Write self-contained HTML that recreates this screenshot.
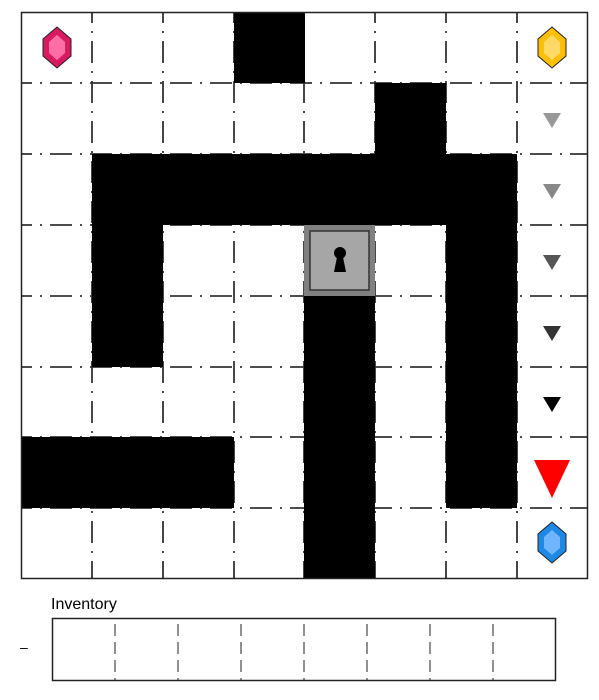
<!DOCTYPE html>
<html><head><style>
html,body{margin:0;padding:0;background:#fff;width:599px;height:700px;overflow:hidden}
svg{display:block}
</style></head><body>
<svg width="599" height="700" viewBox="0 0 599 700" xmlns="http://www.w3.org/2000/svg">
<rect width="599" height="700" fill="#fff"/>
<g stroke="#333" stroke-width="1.8" stroke-dasharray="22,8,2,8" stroke-dashoffset="11" fill="none">
<line x1="92" y1="12" x2="92" y2="579"/><line x1="163" y1="12" x2="163" y2="579"/>
<line x1="234" y1="12" x2="234" y2="579"/><line x1="304" y1="12" x2="304" y2="579"/>
<line x1="375" y1="12" x2="375" y2="579"/><line x1="446" y1="12" x2="446" y2="579"/>
<line x1="517" y1="12" x2="517" y2="579"/>
<line x1="21" y1="83" x2="588" y2="83"/><line x1="21" y1="154" x2="588" y2="154"/>
<line x1="21" y1="225" x2="588" y2="225"/><line x1="21" y1="296" x2="588" y2="296"/>
<line x1="21" y1="367" x2="588" y2="367"/><line x1="21" y1="437" x2="588" y2="437"/>
<line x1="21" y1="508" x2="588" y2="508"/>
</g>
<g fill="#000">
<rect x="234" y="12" width="71" height="71"/>
<rect x="375" y="83" width="71" height="71"/>
<rect x="92" y="154" width="425" height="71"/>
<rect x="92" y="225" width="71" height="142"/>
<rect x="446" y="225" width="71" height="283"/>
<rect x="304" y="296" width="71" height="283"/>
<rect x="21" y="437" width="213" height="71"/>
</g>
<rect x="304" y="225" width="71" height="71" fill="#808080"/>
<rect x="310" y="231" width="59" height="59" fill="#a6a6a6" stroke="#333" stroke-width="1.5"/>
<circle cx="340" cy="253" r="6" fill="#000"/>
<polygon points="337,257 343,257 346,272 334,272" fill="#000"/>
<rect x="21.5" y="12.5" width="566" height="566" fill="none" stroke="#222" stroke-width="1.5"/>
<polygon points="57,27 71,39 71,56 57,68 43,56 43,39" fill="#d81b60" stroke="#222" stroke-width="1"/>
<polygon points="57,35 65,42 65,53 57,60 49,53 49,42" fill="#ff6fa5"/>
<polygon points="552,27 566,39 566,56 552,68 538,56 538,39" fill="#ffc107" stroke="#222" stroke-width="1"/>
<polygon points="552,35 560,42 560,53 552,60 544,53 544,42" fill="#ffd966"/>
<polygon points="552,522 566,534 566,551 552,563 538,551 538,534" fill="#1e88e5" stroke="#222" stroke-width="1"/>
<polygon points="552,530 560,537 560,548 552,555 544,548 544,537" fill="#6fb5ff"/>
<polygon points="543,113 561,113 552,128" fill="#999"/>
<polygon points="543,184 561,184 552,199" fill="#888"/>
<polygon points="543,255 561,255 552,270" fill="#555"/>
<polygon points="543,326 561,326 552,341" fill="#333"/>
<polygon points="543,397 561,397 552,412" fill="#000"/>
<polygon points="534,460 570,460 552,498" fill="#ff0000"/>
<text x="51" y="609" font-family="Liberation Sans, DejaVu Sans, sans-serif" font-size="16" fill="#000">Inventory</text>
<text x="20" y="652" font-family="Liberation Sans, DejaVu Sans, sans-serif" font-size="14" fill="#000">–</text>
<rect x="52.5" y="618.5" width="503" height="62" fill="#fff" stroke="#222" stroke-width="1.5"/>
<g stroke="#222" stroke-width="1" stroke-dasharray="12,6">
<line x1="115" y1="624" x2="115" y2="681"/><line x1="178" y1="624" x2="178" y2="681"/>
<line x1="241" y1="624" x2="241" y2="681"/><line x1="304" y1="624" x2="304" y2="681"/>
<line x1="367" y1="624" x2="367" y2="681"/><line x1="430" y1="624" x2="430" y2="681"/>
<line x1="493" y1="624" x2="493" y2="681"/>
</g>
</svg>
</body></html>
